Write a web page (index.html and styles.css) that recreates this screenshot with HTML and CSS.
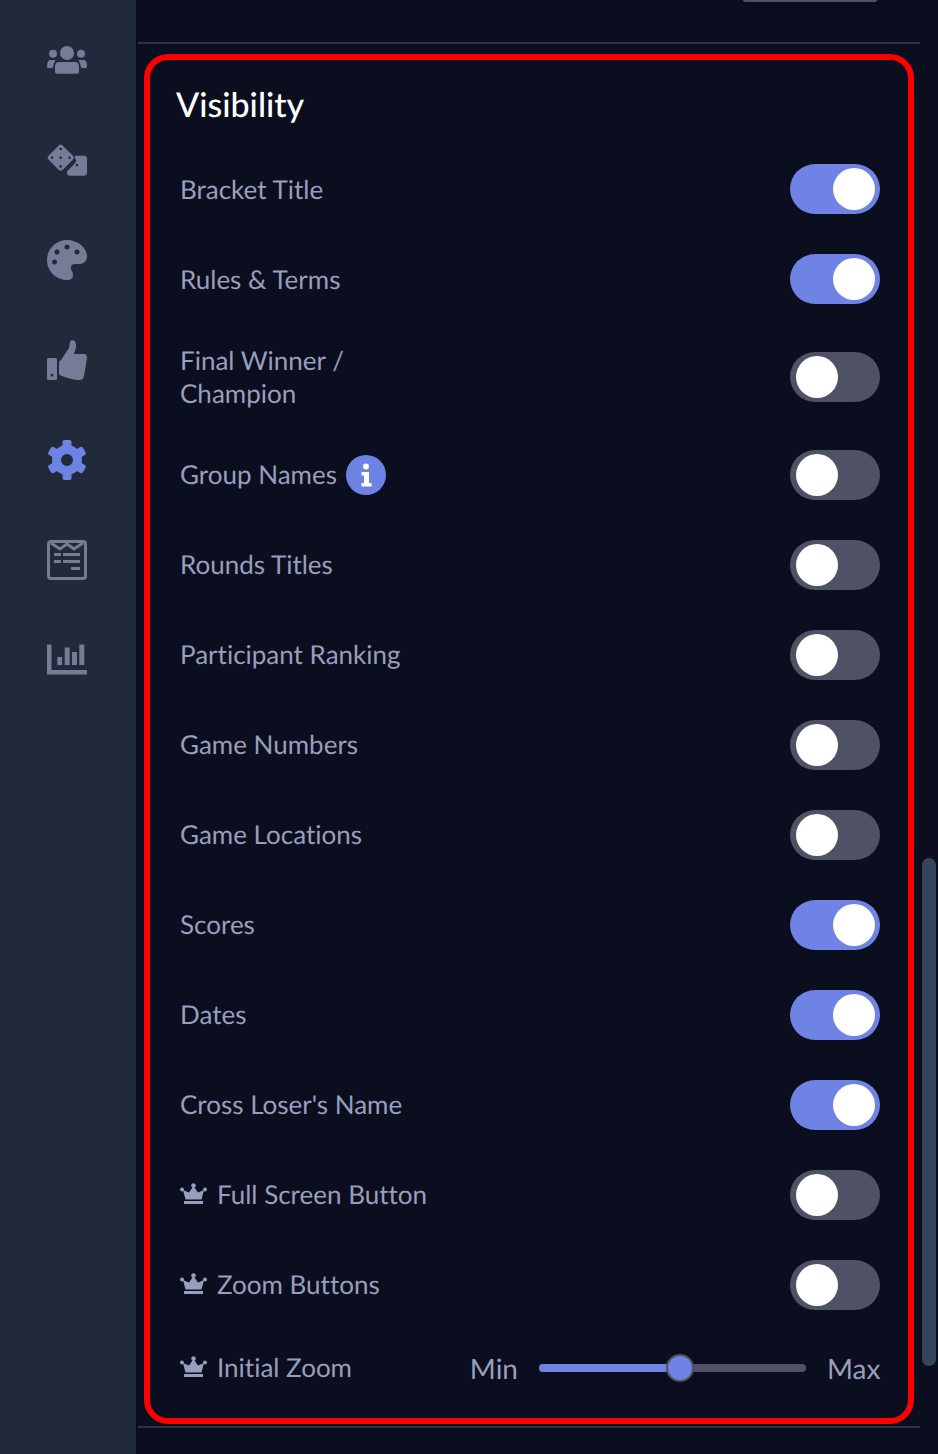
FILE: index.html
```html
<!DOCTYPE html>
<html>
<head>
  <meta charset="utf-8">
  <title>Visibility</title>
  <link rel="stylesheet" href="styles.css">
</head>
<body>
<div class="Page">

  <nav class="SideBar">
    <svg class="NavIcon" viewBox="0 0 40 40">
      <circle cx="20" cy="13" r="7"/>
      <circle cx="6" cy="13.7" r="4"/>
      <circle cx="34" cy="13.7" r="4"/>
      <path d="M12 22h16c2.500 0 4 2 4 4.500v5c0 1.300-.8 2.200-2 2.200H10c-1.200 0-2-.9-2-2.200v-5C8 24 9.500 22 12 22z"/>
      <path d="M3 20h4.500c.6 0 1 .3.800.8C7.400 22.500 6.500 24 6.200 26.500c-.1.900-.6 1.500-1.500 1.500H1.500C.6 28 0 27.400 0 26.500 0 23 1 20 3 20z"/>
      <path d="M37 20h-4.500c-.6 0-1 .3-.8.8.9 1.700 1.800 3.200 2.100 5.700.1.900.6 1.500 1.500 1.500h3.200c.9 0 1.500-.6 1.500-1.500C40 23 39 20 37 20z"/>
    </svg>
    <svg class="NavIcon" viewBox="0 0 40 40">
      <path d="M28 15.700h9c1.800 0 3 1.200 3 3v14c0 1.800-1.200 3-3 3H23c-1.800 0-3-1.200-3-3v-1.500l8-8c1.500-1.500 1.500-3.500 0-5z"/>
      <rect x="3.700" y="7.700" width="20" height="20" rx="3" transform="rotate(45 13.700 17.700)"/>
      <g class="Pips">
        <circle cx="13.700" cy="9" r="1.300"/>
        <circle cx="5" cy="17.700" r="1.300"/>
        <circle cx="13.700" cy="17.700" r="1.300"/>
        <circle cx="22.400" cy="17.700" r="1.300"/>
        <circle cx="13.700" cy="26.400" r="1.300"/>
        <circle cx="30" cy="25" r="1.300"/>
      </g>
    </svg>
    <svg class="NavIcon" viewBox="0 0 40 40">
      <path d="M20 0c11 0 20 8 20 16 0 5.500-3.500 8-8 8h-4c-3 0-4.800 2.200-4 5 .6 2 2 3.500 2 6 0 3-2 5-6 5C9 40 0 31 0 20S9 0 20 0z"/>
      <g class="Pips">
        <circle cx="10" cy="12" r="2.500"/>
        <circle cx="20" cy="7" r="2.500"/>
        <circle cx="30" cy="12" r="2.500"/>
        <circle cx="7.500" cy="22" r="2.500"/>
      </g>
    </svg>
    <svg class="NavIcon" viewBox="0 0 40 40">
      <rect x="0" y="18" width="10" height="22" rx="1.500"/>
      <circle class="Pips" cx="5" cy="35" r="1.500"/>
      <path d="M14 20l8-12c1-3 0-7 3-8 3 0 4.500 3 4 6.500-.3 2.500-1 5-2 7.500h10c2 0 3 2 3 4l-3 18c0 2-2 4-4 4-7 0-13-2-18-4-2-1-3-1-3-3V23c0-2 1-2 2-3z"/>
    </svg>
    <svg class="NavIcon NavIcon-active" viewBox="0 0 40 40">
      <circle class="GearRing" cx="20" cy="20" r="10.500"/>
      <rect x="15.500" y="0" width="9" height="9" rx="2"/>
      <rect x="15.500" y="0" width="9" height="9" rx="2" transform="rotate(60 20 20)"/>
      <rect x="15.500" y="0" width="9" height="9" rx="2" transform="rotate(120 20 20)"/>
      <rect x="15.500" y="0" width="9" height="9" rx="2" transform="rotate(180 20 20)"/>
      <rect x="15.500" y="0" width="9" height="9" rx="2" transform="rotate(240 20 20)"/>
      <rect x="15.500" y="0" width="9" height="9" rx="2" transform="rotate(300 20 20)"/>
    </svg>
    <svg class="NavIcon" viewBox="0 0 40 40">
      <rect class="BracketFrame" x="1.500" y="1.500" width="37" height="37" rx="2.500"/>
      <polyline class="BracketFrame" points="4,3 13,9 20,4 27,9 36,3"/>
      <rect x="7" y="13" width="7" height="3"/>
      <rect x="16" y="13" width="17" height="3"/>
      <rect x="7" y="20" width="7" height="3"/>
      <rect x="16" y="20" width="17" height="3"/>
      <rect x="24" y="27" width="9" height="3"/>
    </svg>
    <svg class="NavIcon" viewBox="0 0 40 40">
      <path d="M0 4.500h4.500V30H40v4.500H0z"/>
      <rect x="10.300" y="17" width="4.800" height="8"/>
      <rect x="17.700" y="7.500" width="5" height="17.500"/>
      <rect x="25" y="12" width="5" height="13"/>
      <rect x="32.300" y="4.500" width="5" height="20.500"/>
    </svg>
  </nav>

  <main class="Content">
    <div class="TopStub"></div>
    <hr class="Divider">

    <section class="VisibilityBox">
      <h2 class="BoxTitle">Visibility</h2>

      <div class="OptionList">
        <div class="Option">
          <span class="OptionLabel">Bracket Title</span>
          <span class="Toggle Toggle-on"></span>
        </div>
        <div class="Option">
          <span class="OptionLabel">Rules &amp; Terms</span>
          <span class="Toggle Toggle-on"></span>
        </div>
        <div class="Option">
          <span class="OptionLabel">Final Winner /<br>Champion</span>
          <span class="Toggle"></span>
        </div>
        <div class="Option">
          <span class="OptionLabel OptionLabel-raised">Group Names
            <svg class="InfoIcon" viewBox="0 0 40 40">
              <circle cx="20" cy="20" r="20" fill="#6d83e3"/>
              <circle cx="20" cy="11.500" r="3" fill="#fff"/>
              <path d="M15.500 17h7.500v11h2.500v3.500h-10V28H18v-7.500h-2.500z" fill="#fff"/>
            </svg>
          </span>
          <span class="Toggle"></span>
        </div>
        <div class="Option">
          <span class="OptionLabel OptionLabel-raised">Rounds Titles</span>
          <span class="Toggle"></span>
        </div>
        <div class="Option">
          <span class="OptionLabel OptionLabel-raised">Participant Ranking</span>
          <span class="Toggle"></span>
        </div>
        <div class="Option">
          <span class="OptionLabel OptionLabel-raised">Game Numbers</span>
          <span class="Toggle"></span>
        </div>
        <div class="Option">
          <span class="OptionLabel OptionLabel-raised">Game Locations</span>
          <span class="Toggle"></span>
        </div>
        <div class="Option">
          <span class="OptionLabel OptionLabel-raised">Scores</span>
          <span class="Toggle Toggle-on"></span>
        </div>
        <div class="Option">
          <span class="OptionLabel OptionLabel-raised">Dates</span>
          <span class="Toggle Toggle-on"></span>
        </div>
        <div class="Option">
          <span class="OptionLabel OptionLabel-raised">Cross Loser's Name</span>
          <span class="Toggle Toggle-on"></span>
        </div>
        <div class="Option">
          <span class="OptionLabel OptionLabel-raised">
            <svg class="CrownIcon" viewBox="0 0 27 22">
              <path d="M13.500 3L18 9.500l6-2.500-2.500 9.500h-16L3 7l6 2.500z"/>
              <circle cx="13.500" cy="2.500" r="2.300"/>
              <circle cx="2" cy="6.500" r="2"/>
              <circle cx="25" cy="6.500" r="2"/>
              <rect x="4" y="18" width="19" height="3"/>
            </svg>
            Full Screen Button
          </span>
          <span class="Toggle"></span>
        </div>
        <div class="Option">
          <span class="OptionLabel OptionLabel-raised">
            <svg class="CrownIcon" viewBox="0 0 27 22">
              <path d="M13.500 3L18 9.500l6-2.500-2.500 9.500h-16L3 7l6 2.500z"/>
              <circle cx="13.500" cy="2.500" r="2.300"/>
              <circle cx="2" cy="6.500" r="2"/>
              <circle cx="25" cy="6.500" r="2"/>
              <rect x="4" y="18" width="19" height="3"/>
            </svg>
            Zoom Buttons
          </span>
          <span class="Toggle"></span>
        </div>
        <div class="Option Option-zoom">
          <span class="OptionLabel OptionLabel-raised">
            <svg class="CrownIcon" viewBox="0 0 27 22">
              <path d="M13.500 3L18 9.500l6-2.500-2.500 9.500h-16L3 7l6 2.500z"/>
              <circle cx="13.500" cy="2.500" r="2.300"/>
              <circle cx="2" cy="6.500" r="2"/>
              <circle cx="25" cy="6.500" r="2"/>
              <rect x="4" y="18" width="19" height="3"/>
            </svg>
            Initial Zoom
          </span>
          <div class="ZoomControl">
            <span class="ZoomEnd">Min</span>
            <div class="Slider">
              <div class="SliderFill" style="width:141px"></div>
              <div class="SliderThumb"></div>
            </div>
            <span class="ZoomEnd ZoomEnd-max">Max</span>
          </div>
        </div>
      </div>
    </section>

    <hr class="Divider Divider-bottom">
  </main>

  <div class="ScrollThumb"></div>
</div>
</body>
</html>
```

FILE: styles.css
```css
* {
  box-sizing: border-box;
}
html, body {
  margin: 0;
  height: 100%;
  background-color: #0b0e1e;
}
body {
  overflow: hidden;
  font-family: "Lato", "Liberation Sans", sans-serif;
  font-variant-ligatures: none;
  text-rendering: geometricPrecision;
}
.Page {
  position: relative;
  display: flex;
  height: 1454px;
}
.SideBar {
  flex: none;
  display: flex;
  flex-direction: column;
  align-items: center;
  gap: 60px;
  width: 136px;
  padding: 40px 2px 0 0;
  background-color: #212a3b;
}
.NavIcon {
  display: block;
  width: 40px;
  height: 40px;
  fill: #767c96;
}
.NavIcon-active {
  fill: #6d83e3;
}
.Pips {
  fill: #212a3b;
}
.GearRing {
  fill: none;
  stroke: #6d83e3;
  stroke-width: 9;
}
.BracketFrame {
  fill: none;
  stroke: #767c96;
  stroke-width: 3;
}
.Content {
  flex: 1;
  min-width: 0;
  padding: 0 18px 0 2px;
}
.TopStub {
  width: 134px;
  height: 2px;
  margin: 0 43px 40px auto;
  border-radius: 0 0 6px 6px;
  background-color: #4f5264;
}
.Divider {
  height: 2px;
  margin: 0;
  border: 0;
  background-color: #2f3241;
}
.Divider-bottom {
  margin-top: 2px;
}
.VisibilityBox {
  margin: 10px 6px 0;
  padding: 23px 28px 32px 26px;
  border: 6px solid #ff0000;
  border-radius: 24px;
}
.BoxTitle {
  margin: 0 0 37px;
  color: #fff;
  font-size: 34px;
  font-weight: 500;
  line-height: 44px;
}
.OptionList {
  display: flex;
  flex-direction: column;
  gap: 40px;
  padding-left: 4px;
}
.Option {
  display: flex;
  align-items: center;
  justify-content: space-between;
}
.OptionLabel {
  display: flex;
  align-items: center;
  flex-wrap: wrap;
  color: #989ebb;
  font-size: 26px;
  line-height: 33px;
}
.OptionLabel-raised {
  margin-top: -2px;
}
.InfoIcon {
  flex: none;
  width: 40px;
  height: 40px;
  margin: 1px 0 -1px 9px;
}
.CrownIcon {
  flex: none;
  width: 27px;
  height: 22px;
  margin: 0 10px 0 0;
  fill: #989ebb;
}
.Toggle {
  position: relative;
  flex: none;
  display: block;
  width: 90px;
  height: 50px;
  border-radius: 25px;
  background-color: #4f5264;
}
.Toggle::after {
  content: "";
  position: absolute;
  top: 4px;
  left: 6px;
  width: 42px;
  height: 42px;
  border-radius: 50%;
  background-color: #fff;
}
.Toggle-on {
  background-color: #6e83e4;
}
.Toggle-on::after {
  left: 43px;
}
.Option-zoom {
  height: 36px;
}
.ZoomControl {
  display: flex;
  align-items: center;
  gap: 21px;
}
.ZoomEnd {
  color: #989ebb;
  font-size: 28px;
  line-height: 36px;
}
.ZoomEnd-max {
  width: 53px;
  text-align: right;
}
.Slider {
  position: relative;
  width: 267px;
  height: 8px;
  border-radius: 4px;
  background-color: #4f5264;
}
.SliderFill {
  height: 100%;
  border-radius: 4px 0 0 4px;
  background-color: #6e83e4;
}
.SliderThumb {
  position: absolute;
  top: -10px;
  left: 127px;
  width: 28px;
  height: 28px;
  border: 2px solid #4f5264;
  border-radius: 50%;
  background-color: #6e83e4;
}
.ScrollThumb {
  position: absolute;
  top: 858px;
  left: 922px;
  width: 14px;
  height: 508px;
  border-radius: 7px;
  background-color: #34445c;
}
```
